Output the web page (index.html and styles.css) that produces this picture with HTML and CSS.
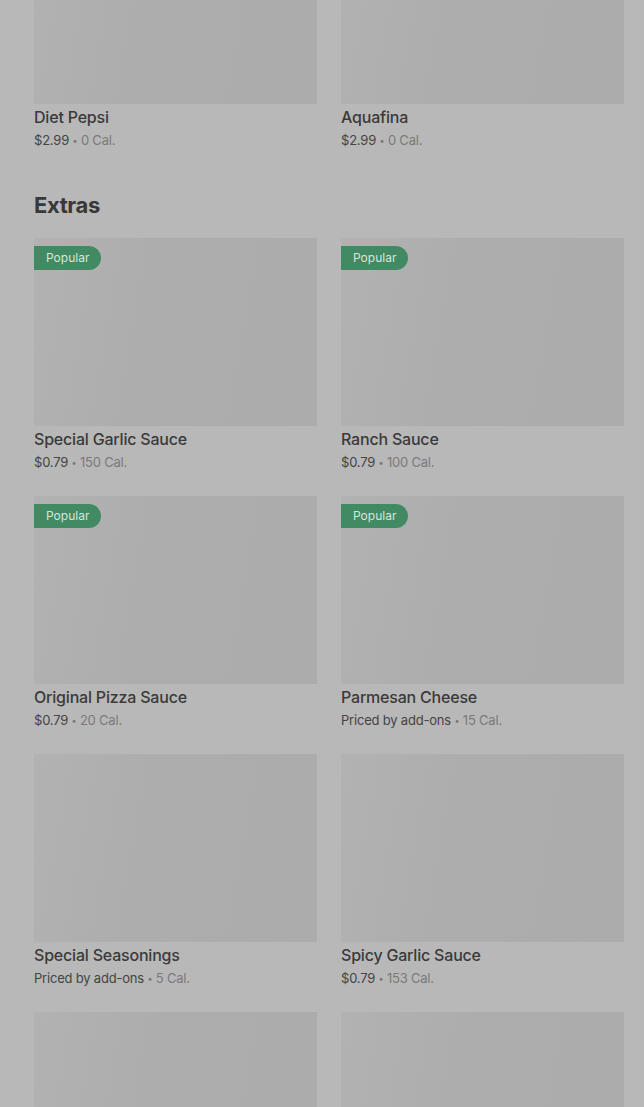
FILE: index.html
```html
<!DOCTYPE html>
<html>
    <head>
        <title>Menu</title>
        <meta charset="utf-8" />
        <meta name="viewport" content="width=device-width, initial-scale=1.0" />
        <link rel="stylesheet" href="styles.css">
    </head>
    <body>
        <main>
            <section class="drinks">
                <div class="grid">
                    <div class="item">
                        <div class="pic"></div>
                        <div class="name">Diet Pepsi</div>
                        <div class="meta"><span class="price">$2.99</span> <span class="dot">•</span> <span class="cal">0 Cal.</span></div>
                    </div>
                    <div class="item">
                        <div class="pic"></div>
                        <div class="name">Aquafina</div>
                        <div class="meta"><span class="price">$2.99</span> <span class="dot">•</span> <span class="cal">0 Cal.</span></div>
                    </div>
                </div>
            </section>
            <section>
                <h2>Extras</h2>
                <div class="grid">
                    <div class="item">
                        <div class="pic"><span class="badge">Popular</span></div>
                        <div class="name">Special Garlic Sauce</div>
                        <div class="meta"><span class="price">$0.79</span> <span class="dot">•</span> <span class="cal">150 Cal.</span></div>
                    </div>
                    <div class="item">
                        <div class="pic"><span class="badge">Popular</span></div>
                        <div class="name">Ranch Sauce</div>
                        <div class="meta"><span class="price">$0.79</span> <span class="dot">•</span> <span class="cal">100 Cal.</span></div>
                    </div>
                    <div class="item">
                        <div class="pic"><span class="badge">Popular</span></div>
                        <div class="name">Original Pizza Sauce</div>
                        <div class="meta"><span class="price">$0.79</span> <span class="dot">•</span> <span class="cal">20 Cal.</span></div>
                    </div>
                    <div class="item">
                        <div class="pic"><span class="badge">Popular</span></div>
                        <div class="name">Parmesan Cheese</div>
                        <div class="meta"><span class="price">Priced by add-ons</span> <span class="dot">•</span> <span class="cal">15 Cal.</span></div>
                    </div>
                    <div class="item">
                        <div class="pic"></div>
                        <div class="name">Special Seasonings</div>
                        <div class="meta"><span class="price">Priced by add-ons</span> <span class="dot">•</span> <span class="cal">5 Cal.</span></div>
                    </div>
                    <div class="item">
                        <div class="pic"></div>
                        <div class="name">Spicy Garlic Sauce</div>
                        <div class="meta"><span class="price">$0.79</span> <span class="dot">•</span> <span class="cal">153 Cal.</span></div>
                    </div>
                    <div class="item">
                        <div class="pic"></div>
                    </div>
                    <div class="item">
                        <div class="pic"></div>
                    </div>
                </div>
            </section>
        </main>
    </body>
</html>
```

FILE: styles.css
```css
html, body {
    margin: 0;
    padding: 0;
    background-color: #b8b8b8;
    font-family: Inter, "Liberation Sans", sans-serif;
    color: #3a3a3a;
    overflow: hidden;
}
main {
    padding: 0 20px 0 34px;
}
.drinks {
    margin-top: -84px;
}
h2 {
    margin: 39px 0 17px;
    font-size: 22px;
    line-height: 32px;
    font-weight: 700;
    letter-spacing: -0.4px;
    color: #383838;
}
.grid {
    display: grid;
    grid-template-columns: 283px 283px;
    column-gap: 24px;
    row-gap: 24px;
}
.pic {
    position: relative;
    height: 188px;
    background: linear-gradient(100deg, #b2b2b2 0%, #adadad 40%, #acacac 100%);
}
.badge {
    position: absolute;
    top: 8px;
    left: 0;
    padding: 0 12px;
    height: 24px;
    line-height: 24px;
    font-size: 12px;
    color: #d6e6dc;
    background-color: #428a63;
    border-radius: 0 12px 12px 0;
}
.name {
    margin-top: 3px;
    font-size: 16px;
    line-height: 20px;
    font-weight: 500;
    color: #3a3a3a;
    letter-spacing: -0.2px;
}
.meta {
    margin-top: 3px;
    height: 20px;
    font-size: 13px;
    line-height: 20px;
    color: #777;
    letter-spacing: -0.2px;
}
.price {
    color: #444;
}
.dot {
    font-size: 9px;
    line-height: 1;
    vertical-align: 1px;
}
.cal {
    color: #7a7a7a;
}
```
